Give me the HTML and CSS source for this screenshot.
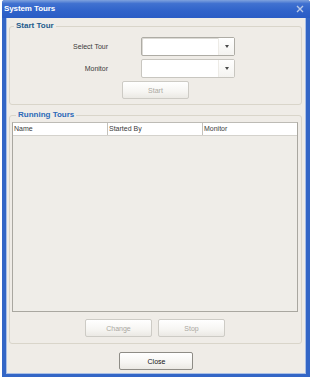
FILE: index.html
```html
<!DOCTYPE html>
<html>
<head>
<meta charset="utf-8">
<link rel="stylesheet" href="styles.css">
</head>
<body>
<div class="window">
  <div class="titlebar">
    <span class="title">System Tours</span>
    <svg class="close-x" width="8" height="8" viewBox="0 0 8 8"><path d="M1 1 L7 7 M7 1 L1 7" stroke="#b9c8e6" stroke-width="1.4" fill="none"/></svg>
  </div>
  <div class="client">
    <fieldset class="group start-group">
      <legend>Start Tour</legend>
      <div class="form-row">
        <span class="field-label">Select Tour</span>
        <div class="combo focused"><span class="combo-text"></span><span class="combo-btn"><span class="arrow"></span></span></div>
      </div>
      <div class="form-row">
        <span class="field-label">Monitor</span>
        <div class="combo"><span class="combo-text"></span><span class="combo-btn"><span class="arrow"></span></span></div>
      </div>
      <div class="btn-row start-row">
        <button class="btn" disabled>Start</button>
      </div>
    </fieldset>
    <fieldset class="group running-group">
      <legend>Running Tours</legend>
      <div class="list">
        <div class="list-header">
          <span class="col">Name</span>
          <span class="col">Started By</span>
          <span class="col last">Monitor</span>
        </div>
        <div class="list-body"></div>
      </div>
      <div class="btn-row action-row">
        <button class="btn" disabled>Change</button>
        <button class="btn" disabled>Stop</button>
      </div>
    </fieldset>
    <div class="footer">
      <button class="btn close-btn">Close</button>
    </div>
  </div>
</div>
</body>
</html>
```
FILE: styles.css
```css
html, body {
  margin: 0;
  padding: 0;
  background: #ffffff;
}
body {
  font-family: "Liberation Sans", Arial, sans-serif;
  font-size: 7px;
  color: #333;
}
.window {
  margin-left: 2px;
  width: 308px;
  height: 377px;
  box-sizing: border-box;
  display: flex;
  flex-direction: column;
  background: #3366c6;
  border-radius: 3px 3px 0 0;
}
.titlebar {
  height: 17px;
  flex: none;
  display: flex;
  align-items: center;
  justify-content: space-between;
  padding: 0 6px 1px 2px;
  background: linear-gradient(to bottom, #7fa2de 0%, #4071d0 20%, #3063ca 60%, #2a5cc5 100%);
  border-radius: 3px 3px 0 0;
}
.title {
  color: #ffffff;
  font-weight: bold;
  font-size: 8px;
  letter-spacing: -0.1px;
}
.close-x {
  display: block;
}
.client {
  flex: 1;
  margin: 0 4px 3px 4px;
  background: #efece7;
  border-left: 1px solid #a9bfe6;
  border-right: 1px solid #a9bfe6;
  border-bottom: 1px solid #a9bfe6;
  display: flex;
  flex-direction: column;
}
.group {
  margin: 0 3px 0 2px;
  padding: 0;
  border: 1px solid #d9d5ca;
  border-radius: 3px;
  min-width: 0;
}
.group legend {
  padding: 0 2px;
  margin-left: 4px;
  font-weight: bold;
  font-size: 8px;
  line-height: 10px;
  height: 10px;
}
.start-group {
  margin-top: 3px;
  padding: 6px 0 5px 0;
}
.start-group legend {
  color: #1e5b8c;
}
.running-group {
  margin-top: 5px;
  padding: 2px 3px 6px 2px;
}
.running-group legend {
  color: #2a69b8;
}
.form-row {
  display: flex;
  align-items: center;
  height: 19px;
  margin-bottom: 3px;
}
.field-label {
  width: 98px;
  text-align: right;
  color: #3a3a3a;
  margin-right: 33px;
}
.combo {
  width: 94px;
  height: 19px;
  box-sizing: border-box;
  border: 1px solid #c8c6c0;
  border-radius: 2px;
  background: #ffffff;
  display: flex;
}
.combo.focused {
  border-color: #aeaca5;
  box-shadow: inset 1px 1px 0 #dcdad5;
}
.combo-text {
  flex: 1;
}
.combo-btn {
  width: 15px;
  border-left: 1px solid #edebe6;
  display: flex;
  align-items: center;
  justify-content: center;
  background: linear-gradient(to bottom, #ffffff, #f4f3f0);
}
.arrow {
  width: 0;
  height: 0;
  border-left: 2px solid transparent;
  border-right: 2px solid transparent;
  border-top: 3px solid #4a4a4a;
}
.btn-row {
  display: flex;
  justify-content: center;
  gap: 6px;
}
.start-row {
  margin-top: 1px;
}
.btn {
  font-family: "Liberation Sans", Arial, sans-serif;
  font-size: 7px;
  height: 18px;
  width: 67px;
  padding: 0;
  box-sizing: border-box;
  border: 1px solid #cdcbc5;
  border-radius: 2px;
  background: linear-gradient(to bottom, #ffffff 0%, #f6f5f2 60%, #ebe9e4 100%);
  color: #aaa79f;
}
.list {
  height: 190px;
  box-sizing: border-box;
  border: 1px solid #a9a7a0;
  border-top-color: #bdbbb5;
  background: #efede8;
  display: flex;
  flex-direction: column;
}
.list-header {
  height: 12px;
  flex: none;
  display: flex;
  background: #ffffff;
  border-bottom: 1px solid #d4d2cc;
}
.col {
  width: 95px;
  box-sizing: border-box;
  border-right: 1px solid #c4c2bc;
  padding-left: 1px;
  line-height: 12px;
  color: #3a3a3a;
}
.col.last {
  flex: 1;
  border-right: none;
}
.list-body {
  flex: 1;
}
.action-row {
  margin-top: 7px;
}
.footer {
  display: flex;
  justify-content: center;
  padding-top: 8px;
}
.close-btn {
  width: 74px;
  border-color: #8e8c86;
  color: #111;
  padding-left: 1px;
}
```
